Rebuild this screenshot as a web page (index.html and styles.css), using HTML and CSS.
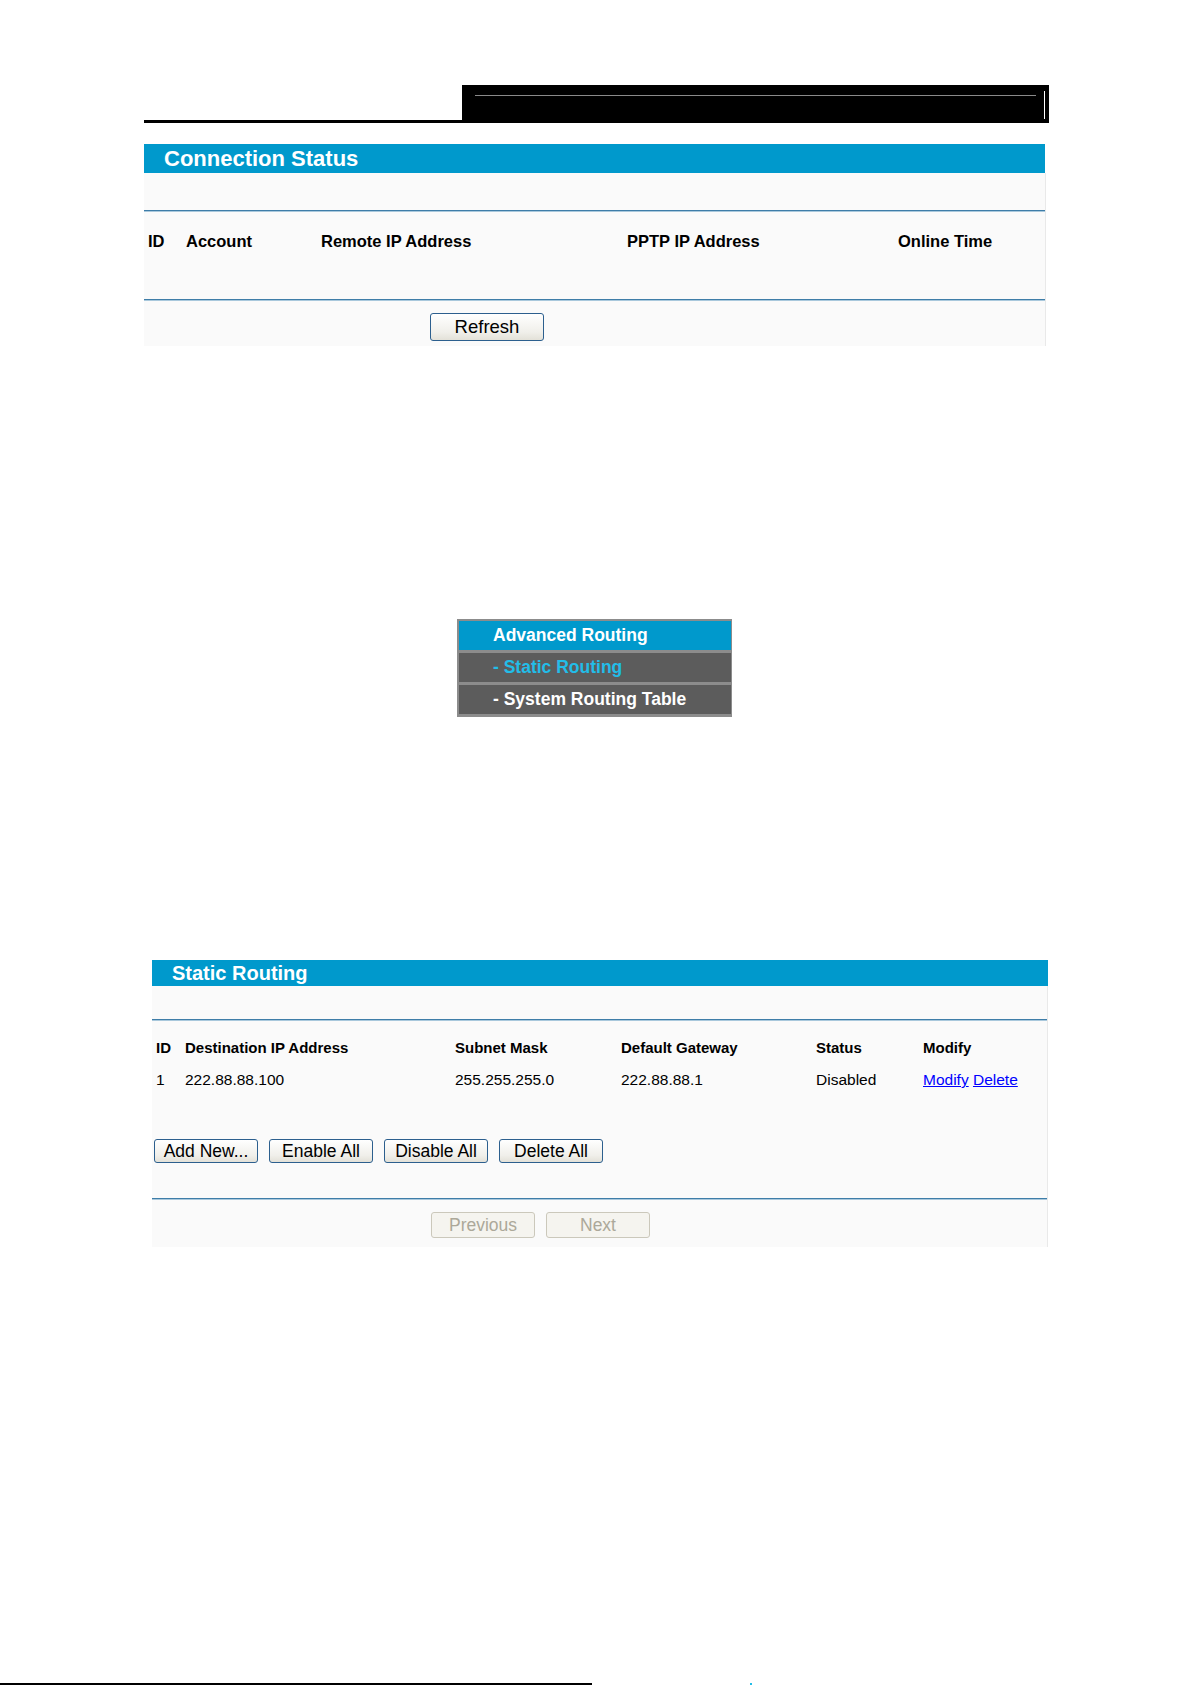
FILE: index.html
```html
<!DOCTYPE html>
<html lang="en">
<head>
	<meta charset="UTF-8">
	<meta name="viewport" content="width=device-width, initial-scale=1.0">
	<title>Static Routing</title>
<link rel="stylesheet" href="styles.css"></head>

<body>
	<main class="page">
		<div class="topbar">
			<div class="topbar-left"></div>
			<div class="topbar-right">
				<span class="topbar-rule"></span>
				<span class="topbar-tick"></span>
			</div>
		</div>

		<section class="panel panel-conn">
			<h2 class="panel-title">Connection Status</h2>
			<div class="panel-body">
				<hr class="rule">
				<div class="conn-head">
					<span>ID</span>
					<span>Account</span>
					<span>Remote IP Address</span>
					<span>PPTP IP Address</span>
					<span>Online Time</span>
				</div>
				<hr class="rule">
				<div class="conn-actions">
					<button class="btn btn-big">Refresh</button>
				</div>
			</div>
		</section>

		<nav class="menu">
			<a class="menu-head" href="#">Advanced Routing</a>
			<a class="menu-item active" href="#">- Static Routing</a>
			<a class="menu-item" href="#">- System Routing Table</a>
		</nav>

		<section class="panel panel-routes">
			<h2 class="panel-title">Static Routing</h2>
			<div class="panel-body">
				<hr class="rule">
				<div class="route-row route-head">
					<span>ID</span>
					<span>Destination IP Address</span>
					<span>Subnet Mask</span>
					<span>Default Gateway</span>
					<span>Status</span>
					<span>Modify</span>
				</div>
				<div class="route-row">
					<span>1</span>
					<span>222.88.88.100</span>
					<span>255.255.255.0</span>
					<span>222.88.88.1</span>
					<span>Disabled</span>
					<span><a href="#">Modify</a> <a href="#">Delete</a></span>
				</div>
				<div class="route-actions">
					<button class="btn">Add New...</button>
					<button class="btn">Enable All</button>
					<button class="btn">Disable All</button>
					<button class="btn">Delete All</button>
				</div>
				<hr class="rule">
				<div class="pager">
					<button class="btn btn-pager" disabled>Previous</button>
					<button class="btn btn-pager" disabled>Next</button>
				</div>
			</div>
		</section>

		<footer class="page-foot">
			<span class="foot-rule"></span>
			<span class="foot-mark"></span>
		</footer>
	</main>
</body>
</html>
```

FILE: styles.css
```css
body {
  font-family: "Liberation Sans", Arial, sans-serif;
  margin: 0;
  background-color: #ffffff;
  color: #000000;
}

.page {
  padding-top: 85px;
}

/* black page heading strip */
.topbar {
  display: flex;
  margin-left: 144px;
  width: 905px;
  height: 38px;
}

.topbar-left {
  width: 318px;
  border-bottom: 3px solid #000;
}

.topbar-right {
  flex: 1;
  display: flex;
  align-items: flex-start;
  background-color: #000;
  padding: 6px 4px 0 13px;
}

.topbar-rule {
  flex: 1;
  height: 1px;
  margin-top: 4px;
  background-color: #8a8a8a;
}

.topbar-tick {
  width: 1px;
  height: 28px;
  margin-left: 8px;
  background-color: #fff;
}

/* panels */
.panel-title {
  margin: 0;
  background-color: #0099cc;
  color: #fff;
  font-weight: bold;
}

.panel-body {
  background-color: #fafafa;
  border-right: 1px solid #e9e9e9;
}

.rule {
  margin: 0;
  height: 0;
  border: 0;
  border-top: 1px solid #3e7da8;
  border-bottom: 1px solid #a9c8dc;
}

.panel-conn {
  margin: 21px 0 0 144px;
  width: 902px;
}

.panel-conn .panel-title {
  width: 901px;
  height: 29px;
  line-height: 29px;
  font-size: 22px;
  padding-left: 20px;
  box-sizing: border-box;
}

.panel-conn .panel-body {
  padding-top: 37px;
}

.conn-head {
  display: grid;
  grid-template-columns: 38px 135px 306px 271px 1fr;
  height: 87px;
  box-sizing: border-box;
  padding: 19px 0 0 4px;
  font-size: 16.5px;
  font-weight: bold;
  line-height: 20px;
}

.conn-actions {
  padding: 12px 0 5px 286px;
}

/* buttons */
.btn {
  font-family: "Liberation Sans", Arial, sans-serif;
  font-size: 17.5px;
  color: #000;
  width: 104px;
  height: 24px;
  padding: 0;
  border: 1px solid #2c5f8e;
  border-radius: 3px;
  background: linear-gradient(#ffffff, #f0efea 70%, #e3e1d8);
  line-height: 20px;
}

.btn-big {
  width: 114px;
  height: 28px;
  font-size: 18.5px;
}

.btn-pager {
  height: 26px;
  color: #aca899;
  border-color: #cbc8bb;
  background: #f5f4ef;
}

/* side menu */
.menu {
  display: flex;
  flex-direction: column;
  gap: 3px;
  margin: 273px 0 0 457px;
  width: 275px;
  box-sizing: border-box;
  padding: 2px 1px 3px 2px;
  background-color: #8c8c8c;
}

.menu a {
  display: block;
  height: 29px;
  line-height: 29px;
  padding-left: 34px;
  font-size: 17.5px;
  font-weight: bold;
  color: #fff;
  text-decoration: none;
}

.menu-head {
  background-color: #0099cc;
}

.menu-item {
  background-color: #5c5c5c;
}

.menu .active {
  color: #22bde8;
}

/* routing table */
.panel-routes {
  margin: 243px 0 0 152px;
  width: 896px;
}

.panel-routes .panel-title {
  height: 26px;
  line-height: 26px;
  font-size: 20px;
  padding-left: 20px;
}

.panel-routes .panel-body {
  padding: 33px 0 9px;
}

.route-row {
  display: grid;
  grid-template-columns: 29px 270px 166px 195px 107px 1fr;
  padding-left: 4px;
  margin-top: 14px;
  font-size: 15.5px;
  line-height: 18px;
}

.route-head {
  margin-top: 18px;
  font-size: 15px;
  font-weight: bold;
}

.route-row a {
  color: #0000ff;
}

.route-actions {
  display: flex;
  gap: 11px;
  margin: 50px 0 35px 2px;
}

.pager {
  display: flex;
  gap: 11px;
  margin: 12px 0 0 279px;
}

/* bottom page edge */
.page-foot {
  display: flex;
  align-items: flex-end;
  margin-top: 436px;
  height: 2px;
}

.foot-rule {
  width: 592px;
  height: 2px;
  background-color: #000;
}

.foot-mark {
  width: 2px;
  height: 2px;
  margin-left: 158px;
  background-color: #22bde8;
}
```
